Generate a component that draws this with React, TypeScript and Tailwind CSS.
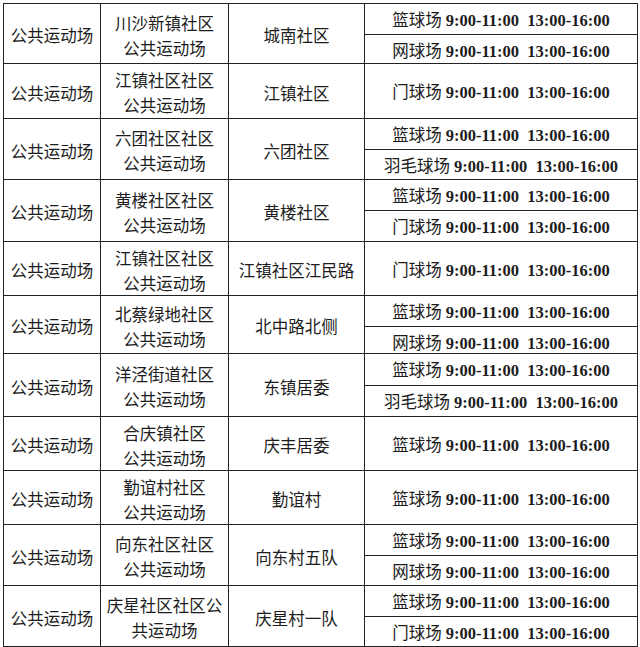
import React from 'react';

type Row = {
  place: string[];
  area: string;
  slots: string[];
  h: string;
};

const rows: Row[] = [
  { place: ['川沙新镇社区', '公共运动场'], area: '城南社区', slots: ['篮球场', '网球场'], h: 'h-[60px]' },
  { place: ['江镇社区社区', '公共运动场'], area: '江镇社区', slots: ['门球场'], h: 'h-[55px]' },
  { place: ['六团社区社区', '公共运动场'], area: '六团社区', slots: ['篮球场', '羽毛球场'], h: 'h-[61px]' },
  { place: ['黄楼社区社区', '公共运动场'], area: '黄楼社区', slots: ['篮球场', '门球场'], h: 'h-[62px]' },
  { place: ['江镇社区社区', '公共运动场'], area: '江镇社区江民路', slots: ['门球场'], h: 'h-[54px]' },
  { place: ['北蔡绿地社区', '公共运动场'], area: '北中路北侧', slots: ['篮球场', '网球场'], h: 'h-[58px]' },
  { place: ['洋泾街道社区', '公共运动场'], area: '东镇居委', slots: ['篮球场', '羽毛球场'], h: 'h-[63px]' },
  { place: ['合庆镇社区', '公共运动场'], area: '庆丰居委', slots: ['篮球场'], h: 'h-[54px]' },
  { place: ['勤谊村社区', '公共运动场'], area: '勤谊村', slots: ['篮球场'], h: 'h-[54px]' },
  { place: ['向东社区社区', '公共运动场'], area: '向东村五队', slots: ['篮球场', '网球场'], h: 'h-[61px]' },
  { place: ['庆星社区社区公', '共运动场'], area: '庆星村一队', slots: ['篮球场', '门球场'], h: 'h-[61px]' },
];

const cjk = "font-['Noto_Sans_CJK_SC',sans-serif]";

function Slot({ name }: { name: string }) {
  return (
    <span className="whitespace-pre">
      <span className={cjk}>{name}</span>
      <span className="font-['Liberation_Serif',serif] font-bold">{' 9:00-11:00  13:00-16:00'}</span>
    </span>
  );
}

export default function App() {
  return (
    <div className="bg-white w-[640px] h-[647px] pt-[3px] pl-[3px] text-[#1c1c1c] text-[16.5px]">
      <div className="w-[635px] border-t-[1.5px] border-l-[1.5px] border-r-[1.5px] border-[#222]">
        {rows.map((r, i) => (
          <div
            key={i}
            className={`flex ${r.h} border-b-[1.5px] border-[#222]`}
          >
            <div className={`w-[97px] shrink-0 flex items-center justify-center pt-[4px] border-r-[1.5px] border-[#222] ${cjk}`}>
              公共运动场
            </div>
            <div className={`w-[128px] shrink-0 flex flex-col items-center justify-center pt-[4px] border-r-[1.5px] border-[#222] leading-[25px] ${cjk}`}>
              {r.place.map((p, j) => (
                <div key={j}>{p}</div>
              ))}
            </div>
            <div className={`w-[136px] shrink-0 flex items-center justify-center pt-[4px] border-r-[1.5px] border-[#222] ${cjk}`}>
              {r.area}
            </div>
            <div className="flex-1 flex flex-col">
              {r.slots.map((s, j) => (
                <div
                  key={j}
                  className={`flex-1 flex items-center justify-center pt-[3px] ${
                    j < r.slots.length - 1 ? 'border-b-[1.5px] border-[#222]' : ''
                  }`}
                >
                  <Slot name={s} />
                </div>
              ))}
            </div>
          </div>
        ))}
      </div>
    </div>
  );
}
